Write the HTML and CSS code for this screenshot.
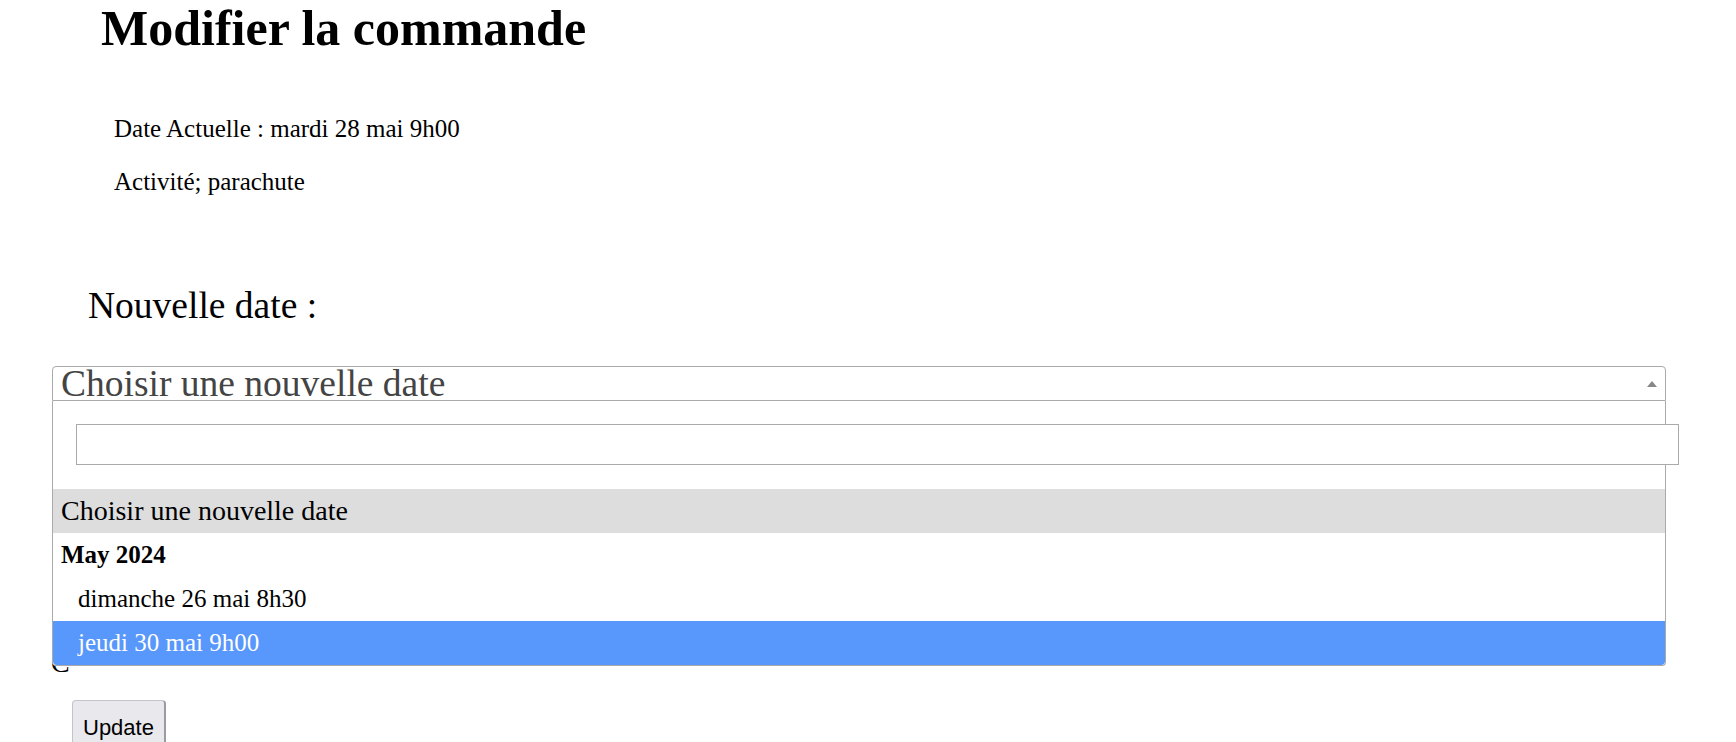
FILE: index.html
```html
<!DOCTYPE html>
<html>
<head>
    <title>Modifier la commande</title>
    <link rel="stylesheet" href="styles.css">
</head>
<body>
    <h1>Modifier la commande</h1>
    <div class="infos">
        <p>Date Actuelle : mardi 28 mai 9h00</p>
        <p>Activité; parachute</p>
    </div>

    <form class="edit-form">
        <label class="field-label" for="new-date">Nouvelle date :</label>
        <div class="select2 open">
            <div class="select2-selection">
                <span class="select2-rendered">Choisir une nouvelle date</span>
                <span class="select2-arrow"></span>
            </div>
            <div class="select2-dropdown">
                <div class="select2-search">
                    <input class="select2-search-field" type="text" id="new-date">
                </div>
                <ul class="select2-results">
                    <li class="option highlighted">Choisir une nouvelle date</li>
                    <li class="group">May 2024</li>
                    <li class="option child">dimanche 26 mai 8h30</li>
                    <li class="option child selected">jeudi 30 mai 9h00</li>
                </ul>
            </div>
        </div>
        <div class="hidden-field">C</div>
        <button type="submit" class="btn-update">Update</button>
    </form>
</body>
</html>
```

FILE: styles.css
```css
body { margin: 0; font-family: "Liberation Serif", "Times New Roman", serif; font-size: 25px; color: #000; background: #fff; }
h1 { margin: 0 0 0 101px; font-size: 50px; line-height: 56px; }
.infos { padding: 34px 0 0 114px; }
.infos p { margin: 25px 0; }

.edit-form { margin: 0 70px 0 52px; }
.field-label { display: block; margin: 88px 0 39px 36px; font-size: 37.5px; }

.select2 { position: relative; }
.select2-selection {
    display: flex;
    align-items: center;
    height: 35px;
    box-sizing: border-box;
    border: 1px solid #aaa;
    border-radius: 4px;
    background: #fff;
}
.select2.open .select2-selection { border-bottom-left-radius: 0; border-bottom-right-radius: 0; }
.select2-rendered {
    flex: 1;
    padding-left: 8px;
    font-size: 37.5px;
    line-height: 31px;
    color: #444;
    white-space: nowrap;
}
.select2-arrow {
    width: 0;
    height: 0;
    margin-right: 8px;
    border-style: solid;
    border-width: 0 5px 6px 5px;
    border-color: transparent transparent #888 transparent;
}
.select2-dropdown {
    position: absolute;
    top: 100%;
    left: 0;
    right: 0;
    z-index: 10;
    background: #fff;
    border: 1px solid #aaa;
    border-top: none;
    border-radius: 0 0 4px 4px;
}
.select2-search { padding: 23px 22px 24px 23px; }
.select2-search-field {
    display: block;
    width: 100%;
    height: 31px;
    padding: 4px 17px;
    margin: 0;
    border: 1px solid #aaa;
    font-size: 25px;
    font-family: inherit;
    outline: none;
}
.select2-results { list-style: none; margin: 0; padding: 0; }
.select2-results li { padding: 6px 8px; font-size: 25px; line-height: 32px; }
.select2-results .highlighted { background: #ddd; font-size: 28px; }
.select2-results .group { font-weight: bold; }
.select2-results .child { padding-left: 1em; }
.select2-results .selected { background: #5897fb; color: #fff; }
.select2-results li:last-child { border-radius: 0 0 4px 4px; }

.hidden-field { margin: 246px 0 0 -1px; font-size: 28px; line-height: 31px; }
.btn-update {
    margin: 22px 0 0 20px;
    padding: 14px 10px;
    font-family: "Liberation Sans", Arial, sans-serif;
    font-size: 22px;
    background: #e9e9ed;
    border: 1px solid #c4c4cc;
    border-right: 2px solid #9a9aa2;
    border-radius: 4px;
    color: #000;
}
```
